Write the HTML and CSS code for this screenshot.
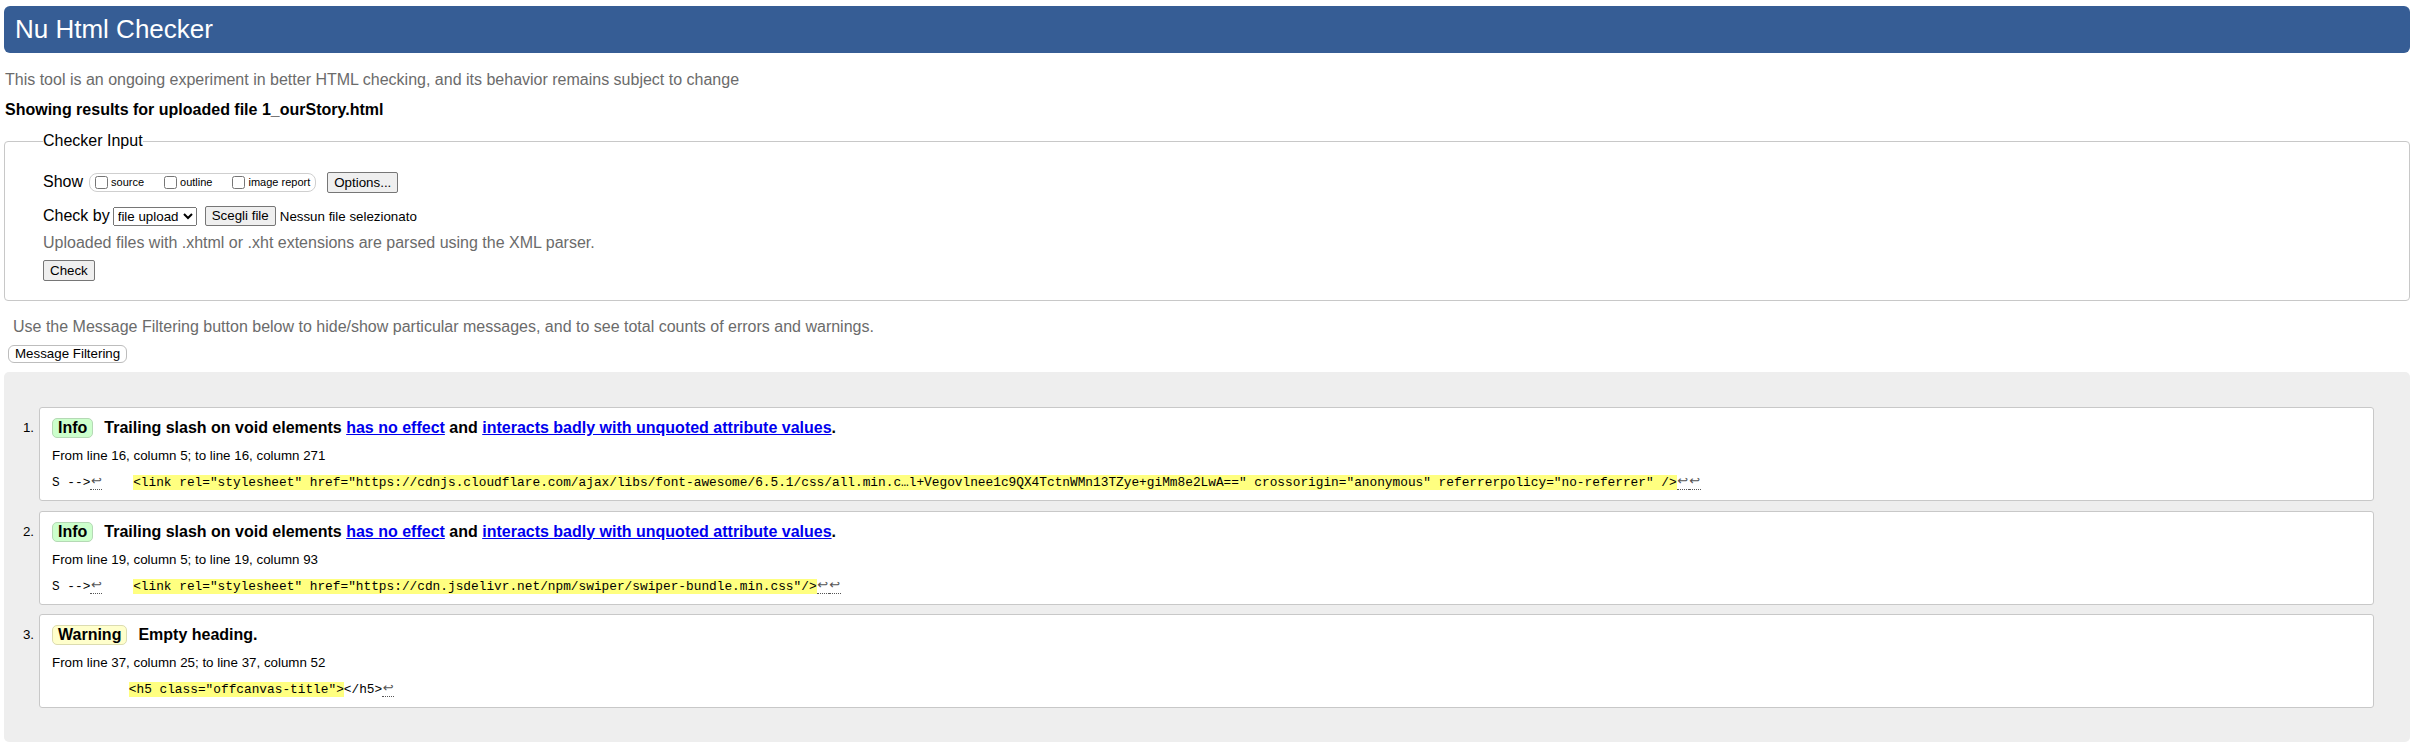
FILE: index.html
```html
<!DOCTYPE html>
<html lang="en">
<head>
<meta charset="utf-8">
<title>Nu Html Checker</title>
<link rel="stylesheet" href="styles.css">
</head>
<body>
<div class="page">
  <h1 class="title">Nu Html Checker</h1>
  <p class="intro">This tool is an ongoing experiment in better HTML checking, and its behavior remains subject to change</p>
  <p class="results-for">Showing results for uploaded file 1_ourStory.html</p>
  <fieldset class="checker">
    <legend class="checker-legend">Checker Input</legend>
    <div class="row">
      <span class="row-label">Show</span>
      <span class="show-group">
        <label class="opt"><input type="checkbox" class="cb">source</label>
        <label class="opt"><input type="checkbox" class="cb">outline</label>
        <label class="opt opt-last"><input type="checkbox" class="cb">image report</label>
      </span>
      <button class="btn btn-options" type="button">Options...</button>
    </div>
    <div class="row row-checkby">
      <span class="row-label">Check by</span>
      <select class="sel"><option>file upload</option></select>
      <button class="btn btn-file" type="button">Scegli file</button>
      <span class="file-name">Nessun file selezionato</span>
    </div>
    <p class="hint">Uploaded files with .xhtml or .xht extensions are parsed using the XML parser.</p>
    <div class="row-submit"><button class="btn" type="button">Check</button></div>
  </fieldset>
  <p class="filter-note">Use the Message Filtering button below to hide/show particular messages, and to see total counts of errors and warnings.</p>
  <button class="btn-filter" type="button">Message Filtering</button>
  <div class="results">
    <ol class="msgs">
      <li class="msg">
        <span class="num">1.</span>
        <div class="card">
          <p class="msg-line"><strong class="badge badge-info">Info</strong>Trailing slash on void elements <a href="#">has no effect</a> and <a href="#">interacts badly with unquoted attribute values</a>.</p>
          <p class="loc">From line 16, column 5; to line 16, column 271</p>
          <p class="extract"><code>S --&gt;<b class="lf">↩</b>    <b class="hl">&lt;link rel="stylesheet" href="https://cdnjs.cloudflare.com/ajax/libs/font-awesome/6.5.1/css/all.min.c…l+Vegovlnee1c9QX4TctnWMn13TZye+giMm8e2LwA==" crossorigin="anonymous" referrerpolicy="no-referrer" /&gt;</b><b class="lf">↩</b><b class="lf">↩</b></code></p>
        </div>
      </li>
      <li class="msg">
        <span class="num">2.</span>
        <div class="card">
          <p class="msg-line"><strong class="badge badge-info">Info</strong>Trailing slash on void elements <a href="#">has no effect</a> and <a href="#">interacts badly with unquoted attribute values</a>.</p>
          <p class="loc">From line 19, column 5; to line 19, column 93</p>
          <p class="extract"><code>S --&gt;<b class="lf">↩</b>    <b class="hl">&lt;link rel="stylesheet" href="https://cdn.jsdelivr.net/npm/swiper/swiper-bundle.min.css"/&gt;</b><b class="lf">↩</b><b class="lf">↩</b></code></p>
        </div>
      </li>
      <li class="msg">
        <span class="num">3.</span>
        <div class="card">
          <p class="msg-line"><strong class="badge badge-warn">Warning</strong>Empty heading.</p>
          <p class="loc">From line 37, column 25; to line 37, column 52</p>
          <p class="extract"><code>          <b class="hl">&lt;h5 class="offcanvas-title"&gt;</b>&lt;/h5&gt;<b class="lf">↩</b></code></p>
        </div>
      </li>
    </ol>
  </div>
</div>
</body>
</html>
```

FILE: styles.css
```css
* { box-sizing: border-box; }
html, body { margin: 0; padding: 0; background: #fff; }
body {
  font-family: "Liberation Sans", Arial, sans-serif;
  font-size: 16px;
  color: #000;
}
.page { padding: 6px 8px 4px 4px; }

.title {
  margin: 0;
  height: 47px;
  line-height: 47px;
  padding-left: 11px;
  background: #365d95;
  color: #fff;
  font-size: 26px;
  font-weight: normal;
  border-radius: 6px;
}
.intro { margin: 17px 0 0 1px; line-height: 20px; color: #6b6b6b; }
.results-for { margin: 10px 0 0 1px; line-height: 20px; font-weight: bold; }

.checker {
  margin: 11px 0 0;
  min-width: 0;
  border: 1px solid #c8c8c8;
  border-radius: 4px;
  padding: 20px 12px 19px 38px;
}
.checker-legend { padding: 0; line-height: 20px; font-size: 16px; }

.row { display: flex; align-items: center; height: 22px; }
.row-checkby { margin-top: 12px; }
.row-label { line-height: 20px; }
.show-group {
  display: inline-flex;
  align-items: center;
  margin-left: 6px;
  height: 19px;
  border: 1px solid #cfcfcf;
  border-radius: 8px;
  padding: 0 5px 0 1px;
  font-size: 11px;
}
.opt { display: inline-flex; align-items: center; margin-right: 16px; }
.opt-last { margin-right: 0; }
.cb { width: 13px; height: 13px; margin: 0 3px 0 4px; }

.btn {
  font-family: "Liberation Sans", Arial, sans-serif;
  font-size: 13.33px;
  color: #000;
  background: #efefef;
  border: 1px solid #767676;
  border-radius: 2px;
  padding: 0 6px;
  height: 21px;
  line-height: 19px;
}
.btn-options { margin-left: 11px; }
.sel {
  margin-left: 3px;
  width: 84px;
  height: 19px;
  font-family: "Liberation Sans", Arial, sans-serif;
  font-size: 13.33px;
  color: #000;
}
.btn-file { margin-left: 8px; height: 20px; line-height: 18px; }
.file-name { margin-left: 4px; font-size: 13.33px; }
.hint { margin: 6px 0 0; line-height: 20px; color: #6b6b6b; }
.row-submit { margin-top: 7px; height: 21px; display: flex; }

.filter-note { margin: 16px 0 0 9px; line-height: 20px; color: #6b6b6b; }
.btn-filter {
  display: block;
  margin: 8px 0 0 4px;
  height: 18px;
  padding: 0 6px;
  font-family: "Liberation Sans", Arial, sans-serif;
  font-size: 13.33px;
  line-height: 16px;
  color: #000;
  background: #fff;
  border: 1px solid #bdbdbd;
  border-radius: 6px;
}

.results {
  margin-top: 9px;
  background: #eeeeee;
  border-radius: 5px;
  padding: 35px 36px 34px 0;
}
.msgs {
  list-style: none;
  margin: 0;
  padding: 0;
  display: flex;
  flex-direction: column;
  gap: 9.5px;
}
.msg { display: flex; align-items: flex-start; }
.num {
  flex: none;
  width: 35px;
  padding: 11px 5px 0 0;
  text-align: right;
  font-size: 13.33px;
  line-height: 20px;
}
.card {
  flex: 1;
  min-width: 0;
  background: #fff;
  border: 1px solid #c8c8c8;
  border-radius: 3px;
  padding: 10px 12px 11px;
}
.msg-line { margin: 0; height: 20px; line-height: 20px; font-weight: bold; }
.badge {
  display: inline-block;
  vertical-align: top;
  height: 20px;
  line-height: 18px;
  padding: 0 5px;
  border: 1px solid;
  border-radius: 5px;
  margin-right: 11px;
}
.badge-info { background: #ccffcc; border-color: #b5d9b5; }
.badge-warn { background: #ffffcc; border-color: #dcdcb0; }
.msg-line a { color: #0000ee; text-decoration: underline; }
.loc { margin: 9px 0 0; line-height: 18px; font-size: 13.33px; }
.extract { margin: 8px 0 0; height: 16px; line-height: 16px; }
.extract code {
  font-family: "Liberation Mono", "DejaVu Sans Mono", monospace;
  font-size: 12.8px;
  white-space: pre;
}
.hl { font-weight: normal; background: #ffff80; }
.lf {
  display: inline-block;
  vertical-align: top;
  width: 12px;
  height: 17px;
  line-height: 16px;
  text-align: center;
  font-weight: normal;
  font-family: "DejaVu Sans", sans-serif;
  font-size: 13px;
  color: #555;
  border-bottom: 1px dotted #555;
}
```
